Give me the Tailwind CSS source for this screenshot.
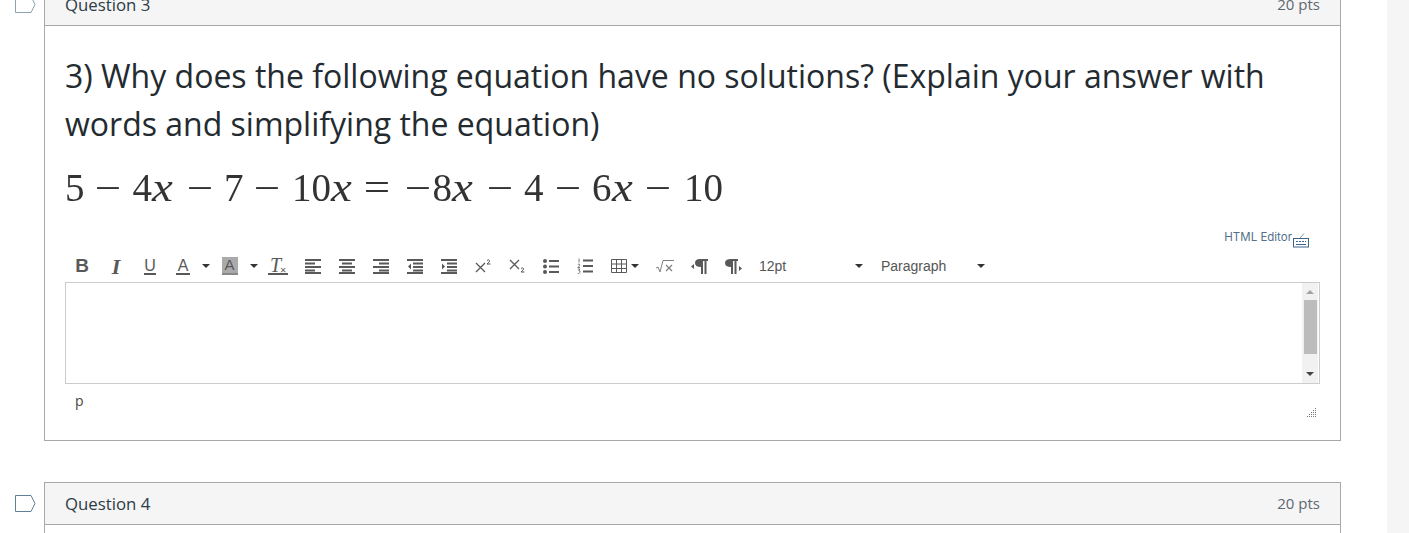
<!DOCTYPE html>
<html lang="en">
<head>
  <meta charset="UTF-8"/>
  <title>Quiz</title>
  <script src="https://cdn.jsdelivr.net/npm/@tailwindcss/browser@4"></script>
</head>
<body class="h-[533px] overflow-hidden bg-white font-['Open_Sans',sans-serif] text-[#2d3b45]">
<div class="flex h-[533px] overflow-hidden">
  <main class="w-[1387px] shrink-0">

    <!-- Question 3 -->
    <section class="flex -mt-[17px]">
      <div class="w-[44px] shrink-0 pl-[15px] pt-[13px]">
        <svg width="21" height="17" viewBox="0 0 21 17" fill="none"><path d="M.5.5h15.500l4 8-4 8H.5z" stroke="#8ca3b0"/></svg>
      </div>
      <div class="w-[1297px] border border-[#a8a8a8]">
        <div class="h-[42px] flex items-center justify-between px-5 bg-[#f5f5f5] border-b border-[#a8a8a8]">
          <span class="text-[16.8px]">Question 3</span>
          <span class="text-[15px] text-[#5d6870]">20 pts</span>
        </div>
        <div class="px-5 pt-[26px]">
          <p class="text-[32px] leading-[48px] text-[#232b30]">3) Why does the following equation have no solutions? (Explain your answer with words and simplifying the equation)</p>

          <!-- equation, an image in the original -->
          <div class="mt-[16px] h-[48px] flex items-center font-['Liberation_Serif',serif] text-[39px] text-[#333] blur-[0.3px]">
            <span>5</span>
            <span class="ml-[12px] scale-x-[1.2]">&minus;</span>
            <span class="ml-[14px]">4</span><i class="w-[21px] scale-x-[1.2] origin-left">x</i>
            <span class="ml-[15.5px] scale-x-[1.2]">&minus;</span>
            <span class="ml-[13.5px]">7</span>
            <span class="ml-[12.5px] scale-x-[1.2]">&minus;</span>
            <span class="ml-[14px]">10</span><i class="w-[21px] scale-x-[1.2] origin-left">x</i>
            <span class="ml-[13.5px] scale-x-[1.2]">=</span>
            <span class="ml-[19px] scale-x-[1.2]">&minus;</span>
            <span class="ml-[4px]">8</span><i class="w-[21px] scale-x-[1.2] origin-left">x</i>
            <span class="ml-[16px] scale-x-[1.2]">&minus;</span>
            <span class="ml-[13px]">4</span>
            <span class="ml-[13px] scale-x-[1.2]">&minus;</span>
            <span class="ml-[13.5px]">6</span><i class="w-[21px] scale-x-[1.2] origin-left">x</i>
            <span class="ml-[14.5px] scale-x-[1.2]">&minus;</span>
            <span class="ml-[15px]">10</span>
          </div>

          <!-- HTML editor link -->
          <div class="mt-[18px] h-[18px] flex justify-end items-start pr-[10px]">
            <span class="text-[11.5px] leading-[14px] text-[#54708a] font-['Inter',sans-serif]">HTML Editor</span>
            <svg class="mt-[2px]" width="18" height="16" viewBox="0 0 18 16" fill="none">
              <rect x="1.5" y="6.5" width="15" height="8.5" stroke="#3f6489"/>
              <path d="M8 6l4-4.5" stroke="#8a97a3"/>
              <path d="M4 9.5h2m1 0h2m1 0h2m1 0h1M4 12.5h10" stroke="#3f6489"/>
            </svg>
          </div>

          <!-- toolbar -->
          <div class="h-[34px] pt-[2px] flex items-center text-[#595959]">
            <span class="w-[34px] text-center font-['Liberation_Sans',sans-serif] font-bold text-[19px]">B</span>
            <span class="w-[34px] text-center font-['Liberation_Serif',serif] italic font-bold text-[22px]">I</span>
            <span class="w-[34px] flex justify-center">
              <span class="border-b-2 border-[#595959] font-['Liberation_Sans',sans-serif] text-[16px] leading-[15px] h-[17px]">U</span>
            </span>
            <span class="w-[32px] flex justify-center">
              <span class="border-b-2 border-[#595959] font-['Liberation_Sans',sans-serif] text-[16px] leading-[15px] h-[17px] px-[2px]">A</span>
            </span>
            <span class="w-[13px] flex justify-center"><span class="border-x-[4px] border-t-[4px] border-x-transparent border-t-[#333]"></span></span>
            <span class="w-[35px] flex justify-center">
              <span class="w-[16px] h-[18px] bg-[#aaa] border-b-2 border-[#888] text-center font-['Liberation_Sans',sans-serif] text-[15px] leading-[16px]">A</span>
            </span>
            <span class="w-[13px] flex justify-center"><span class="border-x-[4px] border-t-[4px] border-x-transparent border-t-[#333]"></span></span>
            <span class="w-[36px] flex justify-center relative">
              <span class="border-b-2 border-[#595959] font-['Liberation_Serif',serif] italic text-[20px] leading-[16px] h-[18px] pl-[2px] pr-[7px]">T</span>
              <span class="absolute left-[20px] top-[7px] text-[11px] leading-[12px]">&times;</span>
            </span>

            <!-- align left -->
            <span class="w-[34px] flex justify-center">
              <svg width="16" height="15" viewBox="0 0 16 15" stroke="#595959" stroke-width="2"><path d="M0 1h16M0 4.500h10M0 8h16M0 11.500h10" /><path d="M0 14h16"/></svg>
            </span>
            <!-- align center -->
            <span class="w-[34px] flex justify-center">
              <svg width="16" height="15" viewBox="0 0 16 15" stroke="#595959" stroke-width="2"><path d="M0 1h16M3 4.500h10M0 8h16M3 11.500h10M0 14h16"/></svg>
            </span>
            <!-- align right -->
            <span class="w-[34px] flex justify-center">
              <svg width="16" height="15" viewBox="0 0 16 15" stroke="#595959" stroke-width="2"><path d="M0 1h16M6 4.500h10M0 8h16M6 11.500h10M0 14h16"/></svg>
            </span>
            <!-- outdent -->
            <span class="w-[34px] flex justify-center">
              <svg width="16" height="15" viewBox="0 0 16 15" stroke="#595959" stroke-width="2"><path d="M0 1h16M6 4.500h10M6 8h10M6 11.500h10M0 14h16"/><path d="M4 4.500v6l-3-3z" fill="#595959" stroke="none"/></svg>
            </span>
            <!-- indent -->
            <span class="w-[34px] flex justify-center">
              <svg width="16" height="15" viewBox="0 0 16 15" stroke="#595959" stroke-width="2"><path d="M0 1h16M6 4.500h10M6 8h10M6 11.500h10M0 14h16"/><path d="M1 4.500v6l3-3z" fill="#595959" stroke="none"/></svg>
            </span>

            <!-- super / sub -->
            <span class="w-[34px] flex justify-center">
              <svg width="16" height="14" viewBox="0 0 16 14" fill="none" stroke="#595959"><path d="M1 4l9 9M10 4l-9 9" stroke-width="1.300"/><path d="M12 1.500q2-1.500 2.500 0t-2.500 3.500h3.500" stroke-width="1"/></svg>
            </span>
            <span class="w-[34px] flex justify-center">
              <svg width="16" height="16" viewBox="0 0 16 16" fill="none" stroke="#595959"><path d="M1 2l9 9M10 2l-9 9" stroke-width="1.300"/><path d="M12 10.500q2-1.500 2.500 0t-2.500 3.500h3.500" stroke-width="1"/></svg>
            </span>

            <!-- bullet list -->
            <span class="w-[34px] flex justify-center">
              <svg width="16" height="15" viewBox="0 0 16 15" fill="#595959"><circle cx="2" cy="2" r="2"/><circle cx="2" cy="7.500" r="2"/><circle cx="2" cy="13" r="2"/><path d="M6 1h10v2H6zM6 6.500h10v2H6zM6 12h10v2H6z"/></svg>
            </span>
            <!-- numbered list -->
            <span class="w-[34px] flex justify-center">
              <svg width="16" height="16" viewBox="0 0 16 16" fill="none" stroke="#595959"><path d="M2 .5v4M.8 6.500q1.500-1 2 0t-2 3h2.200M.8 11h2l-1 1.500q2 0 1 2t-2 .8" stroke-width=".8"/><path d="M6 2.500h10M6 8h10M6 13.500h10" stroke-width="2"/></svg>
            </span>
            <!-- table -->
            <span class="w-[46px] flex justify-start items-center gap-[4px] pl-[9px]">
              <svg width="16" height="14" viewBox="0 0 16 14" fill="none" stroke="#595959"><path d="M.5.500h15v13H.5zM.5 5h15M.5 9.500h15M5.500.5v13M10.500.5v13"/></svg>
              <span class="border-x-[4px] border-t-[4px] border-x-transparent border-t-[#333]"></span>
            </span>
            <!-- equation -->
            <span class="w-[34px] flex justify-center">
              <svg width="18" height="13" viewBox="0 0 18 13" fill="none" stroke="#808080"><path d="M0 8l2-1 2 5 3-11.500h11" stroke-width="1"/><path d="M10 5l6 6M16 5l-6 6" stroke-width="1.200"/></svg>
            </span>
            <!-- ltr / rtl -->
            <span class="w-[34px] flex justify-center">
              <svg width="17" height="15" viewBox="0 0 17 15" fill="#595959"><path d="M0 7.500l3-2.500v5z"/><path d="M9 0h8v2h-1.500v13h-2V2h-1.500v13H10V8Q4 8 4 4t5-4z"/></svg>
            </span>
            <span class="w-[34px] flex justify-center">
              <svg width="17" height="15" viewBox="0 0 17 15" fill="#595959"><path d="M17 9.500l-3-2.500v5z"/><path d="M6 0h7v2h-1.500v13h-2V2H8v13H6V8Q0 8 0 4t6-4z"/></svg>
            </span>

            <!-- font size / format -->
            <span class="w-[122px] ml-[9px] flex items-center justify-between pr-[18px] font-['Liberation_Sans',sans-serif] text-[14px] text-[#555]">
              12pt
              <span class="border-x-[4px] border-t-[4px] border-x-transparent border-t-[#333]"></span>
            </span>
            <span class="w-[104px] flex items-center justify-between font-['Liberation_Sans',sans-serif] text-[14px] text-[#555]">
              Paragraph
              <span class="border-x-[4px] border-t-[4px] border-x-transparent border-t-[#333]"></span>
            </span>
          </div>

          <!-- editor area -->
          <div class="h-[102px] flex justify-end border border-[#ccc]">
            <div class="w-[16px] mr-[1px] bg-[#f1f1f1] flex flex-col items-center">
              <span class="mt-[7px] border-x-[4px] border-b-[4px] border-x-transparent border-b-[#a3a3a3]"></span>
              <span class="mt-[6px] w-[13px] h-[54px] bg-[#bcbcbc]"></span>
              <span class="mt-[18px] border-x-[4px] border-t-[4px] border-x-transparent border-t-[#444]"></span>
            </div>
          </div>

          <!-- status bar -->
          <div class="h-[56px] flex justify-between pl-[10px] pr-[3px]">
            <span class="mt-[7px] text-sm leading-[20px] text-[#444]">p</span>
            <svg class="mt-[24px]" width="10" height="10" viewBox="0 0 10 10" fill="#777">
              <path d="M8 0h1v1H8zM8 2h1v1H8zM6 2h1v1H6zM8 4h1v1H8zM6 4h1v1H6zM4 4h1v1H4zM8 6h1v1H8zM6 6h1v1H6zM4 6h1v1H4zM2 6h1v1H2zM8 8h1v1H8zM6 8h1v1H6zM4 8h1v1H4zM2 8h1v1H2zM0 8h1v1H0z"/>
            </svg>
          </div>
        </div>
      </div>
    </section>

    <!-- Question 4 -->
    <section class="flex mt-[41px]">
      <div class="w-[44px] shrink-0 pl-[15px] pt-[13px]">
        <svg width="21" height="17" viewBox="0 0 21 17" fill="none"><path d="M.5.5h15.500l4 8-4 8H.5z" stroke="#5f8194"/></svg>
      </div>
      <div class="w-[1297px] h-[80px] border border-[#a8a8a8]">
        <div class="h-[42px] flex items-center justify-between px-5 bg-[#f5f5f5] border-b border-[#a8a8a8]">
          <span class="text-[16.8px]">Question 4</span>
          <span class="text-[15px] text-[#5d6870]">20 pts</span>
        </div>
      </div>
    </section>
  </main>

  <!-- page scrollbar track -->
  <div class="w-[22px] bg-[#f5f5f5]"></div>
</div>
</body>
</html>
